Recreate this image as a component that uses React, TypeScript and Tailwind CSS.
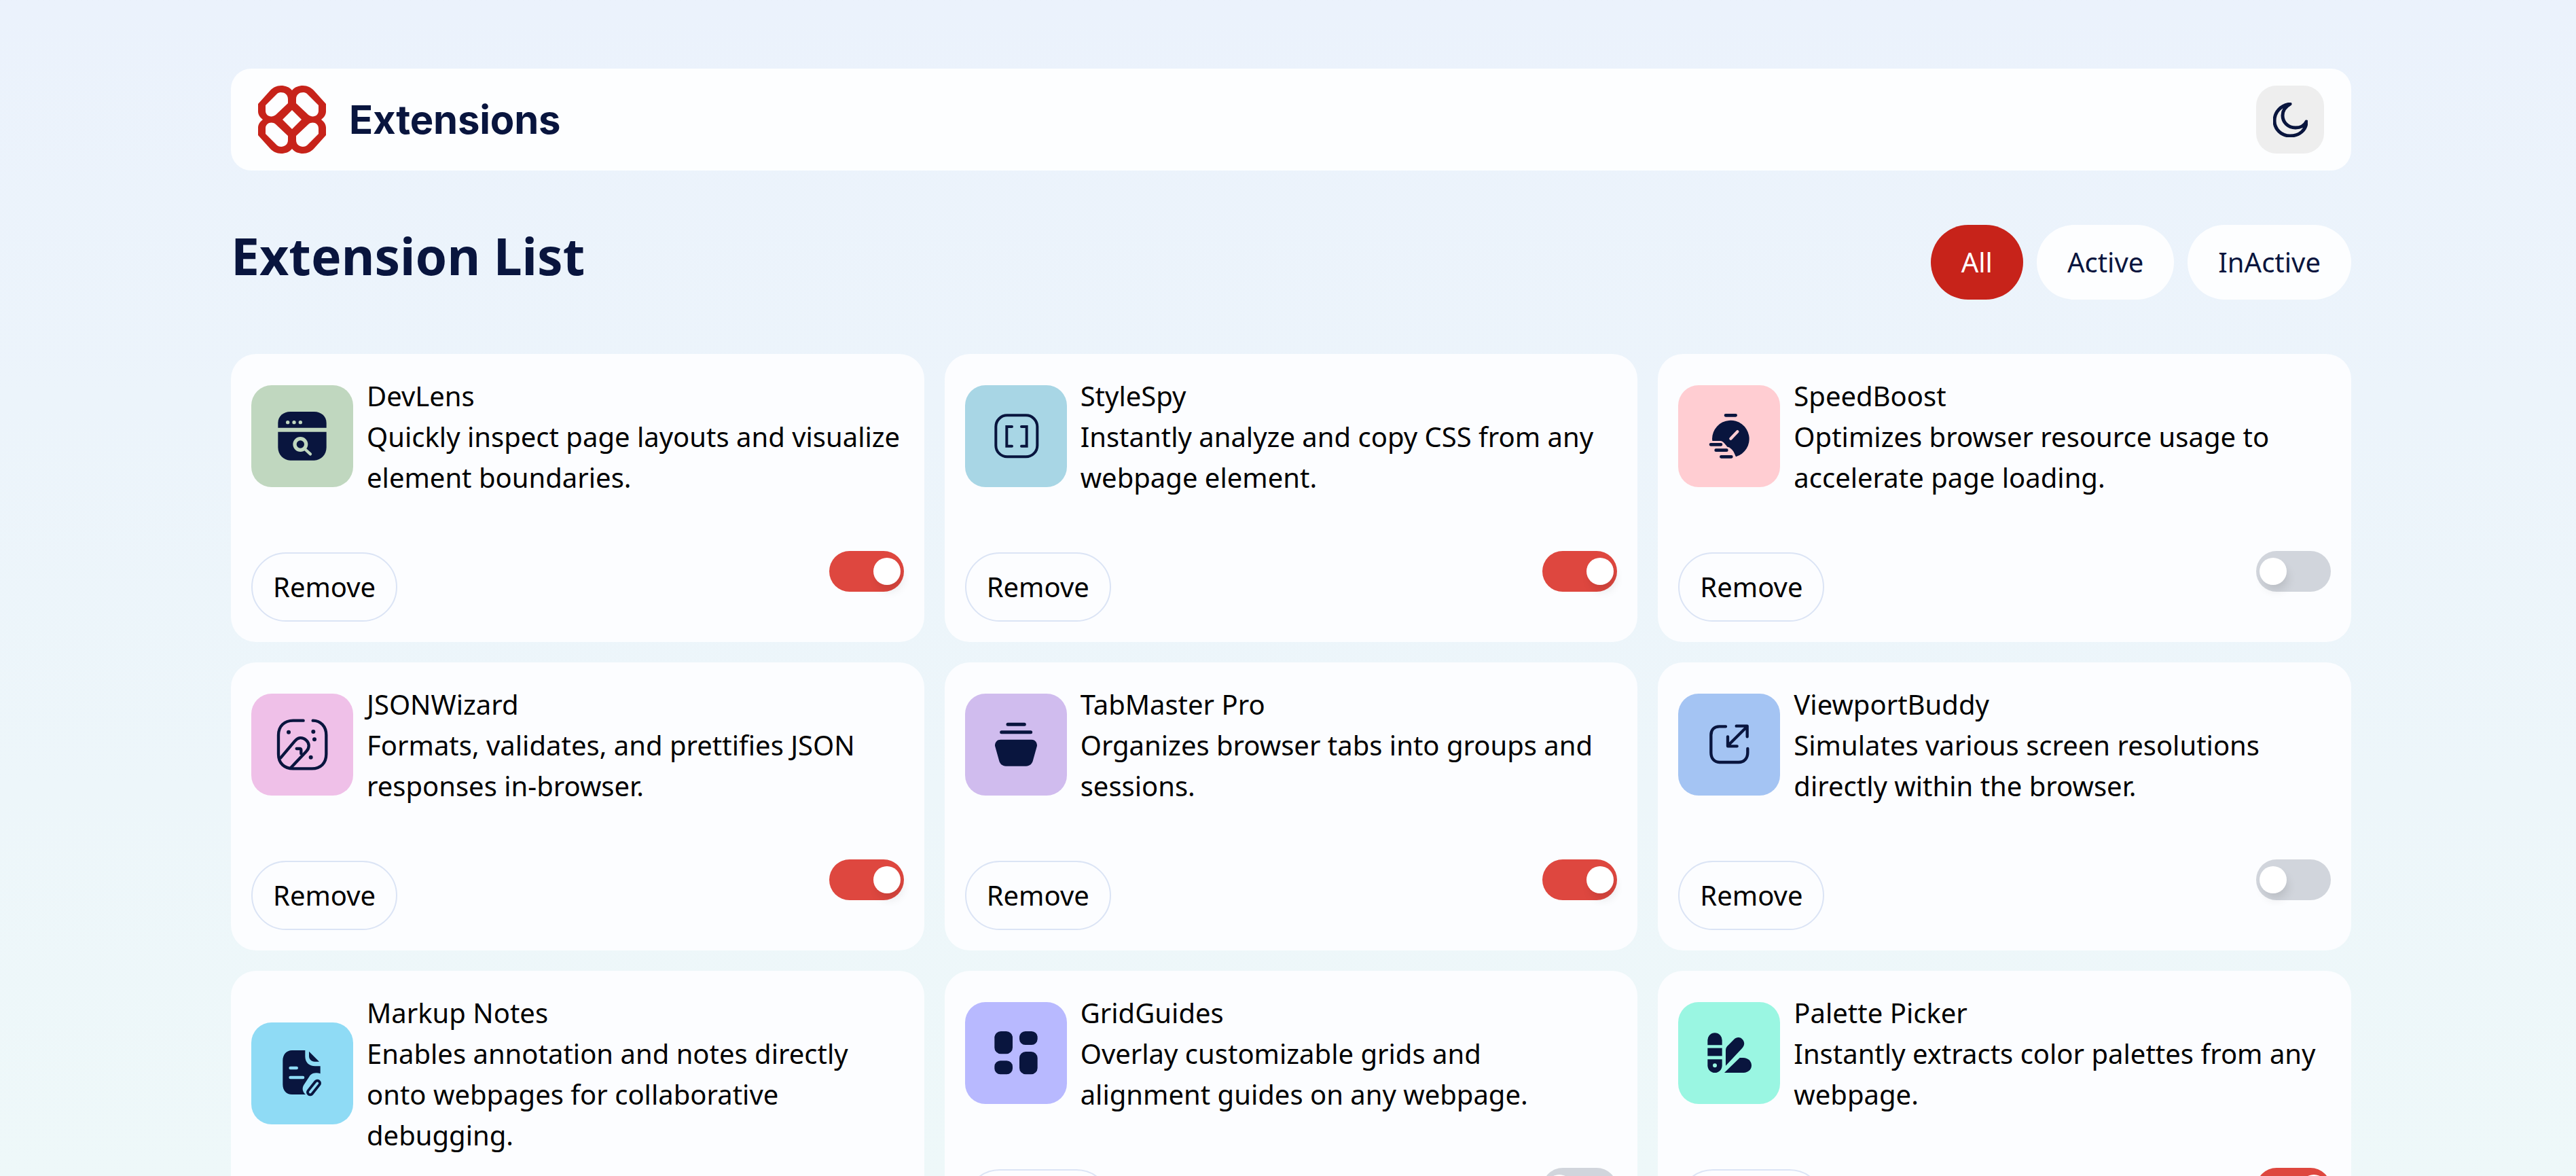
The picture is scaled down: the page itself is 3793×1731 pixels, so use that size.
const NAVY = "#09153e";

function Logo() {
  return (
    <svg width="100" height="100" viewBox="0 0 100 100" className="shrink-0" aria-hidden>
      <path
        fillRule="evenodd"
        fill="#c7231a"
        d="M50 7C46 2 40 0 34 0C27 0 22 3 18 7L0 27V38C0 43 3 47 7 50C3 53 0 57 0 62V73L18 93C22 97 27 100 34 100C40 100 46 98 50 93C54 98 60 100 66 100C73 100 78 97 82 93L100 73V62C100 57 97 53 93 50C97 47 100 43 100 38V27L82 7C78 3 73 0 66 0C60 0 54 2 50 7ZM11 29L28 12C33 8 44 10 44 20V26L26 43C20 48 11 45 11 37ZM89 29L72 12C67 8 56 10 56 20V26L74 43C80 48 89 45 89 37ZM11 71L28 88C33 92 44 90 44 80V74L26 57C20 52 11 55 11 63ZM89 71L72 88C67 92 56 90 56 80V74L74 57C80 52 89 55 89 63ZM50 36L36 50L50 64L64 50Z"
      />
    </svg>
  );
}

function Moon() {
  return (
    <svg width="51" height="51" viewBox="0 0 51 51" fill="none" stroke={NAVY} strokeWidth="5" strokeLinejoin="round" aria-hidden>
      <path d="M25 2C11 4 2 14 2 27C2 39 12 49 25 49C39 49 49 40 49 28C46 34 40 37 33 37C22 37 14 29 14 19C14 12 18 6 25 2Z" />
    </svg>
  );
}

// icons are traced 3x, so each viewBox is 240 wide for an 80px glyph
function DevLensIcon({ bg }: { bg: string }) {
  return (
    <svg width="80" height="80" viewBox="135 153 240 240" aria-hidden>
      <path fill={NAVY} d="M148 236V215C148 185 172 165 202 165H308C338 165 362 185 362 215V236Z" />
      <path fill={NAVY} d="M148 254H362V322C362 355 338 380 308 380H202C172 380 148 355 148 322Z" />
      <circle cx="191" cy="212" r="8" fill={bg} />
      <circle cx="219" cy="212" r="8" fill={bg} />
      <circle cx="247" cy="212" r="8" fill={bg} />
      <circle cx="247" cy="309" r="25" fill="none" stroke={bg} strokeWidth="16" />
      <path d="M270 333L291 352" stroke={bg} strokeWidth="13" strokeLinecap="round" />
    </svg>
  );
}

function StyleSpyIcon() {
  return (
    <svg width="80" height="80" viewBox="138 153 240 240" fill="none" stroke={NAVY} strokeWidth="12" strokeLinecap="round" aria-hidden>
      <rect x="169" y="181" width="183" height="183" rx="50" />
      <path d="M240 231H217V317H240M282 231H305V317H282" />
    </svg>
  );
}

function SpeedBoostIcon({ bg }: { bg: string }) {
  return (
    <svg width="80" height="80" viewBox="138 153 240 240" aria-hidden>
      <path fill={NAVY} d="M183 285A82 82 0 1 1 288 364L278 342C270 330 262 322 250 320C240 310 235 296 220 294H184Z" />
      <path
        fill="none"
        stroke={NAVY}
        strokeWidth="14"
        strokeLinecap="round"
        d="M243 181H287M177 310H222M200 335H247M223 364H268"
      />
      <path d="M265 284L295 253" stroke={bg} strokeWidth="13" strokeLinecap="round" />
    </svg>
  );
}

function JsonWizardIcon() {
  return (
    <svg width="80" height="80" viewBox="135 150 240 240" fill="none" stroke={NAVY} strokeWidth="13" strokeLinecap="round" aria-hidden>
      <path d="M260 164H215C175 164 150 190 150 228V312C150 352 175 376 215 376H298C336 376 361 352 361 312V228C361 190 336 164 302 164" />
      <path d="M160 328L222 255C235 238 255 235 272 250C288 264 288 285 273 300L205 372" />
      <path d="M230 288H244Q250 288 250 295V310" />
      <g fill={NAVY} stroke="none">
        <circle cx="195" cy="215" r="9" />
        <circle cx="304" cy="213" r="9" />
        <circle cx="309" cy="247" r="9" />
        <circle cx="293" cy="326" r="9" />
      </g>
    </svg>
  );
}

function TabMasterIcon() {
  return (
    <svg width="80" height="80" viewBox="138 150 240 240" aria-hidden>
      <path stroke={NAVY} strokeWidth="15" strokeLinecap="round" d="M222 181H295M194 215H323" />
      <path fill={NAVY} d="M165 275C165 258 175 248 190 248H326C341 248 351 258 351 275L333 340C329 356 318 365 303 365H213C198 365 187 356 183 340Z" />
    </svg>
  );
}

function ViewportIcon() {
  return (
    <svg width="80" height="80" viewBox="138 150 240 240" fill="none" stroke={NAVY} strokeWidth="13" strokeLinecap="round" strokeLinejoin="round" aria-hidden>
      <path d="M243 190H215C192 190 178 205 178 228V305C178 330 192 348 215 348H300C325 348 340 330 340 305V288" />
      <path d="M252 275L338 190M290 188H338V235M252 235V277H293" />
    </svg>
  );
}

function MarkupIcon({ bg }: { bg: string }) {
  return (
    <svg width="80" height="80" viewBox="135 147 240 240" aria-hidden>
      <path fill={NAVY} d="M268 165H210C185 165 169 185 169 210V315C169 342 185 360 210 360H270C258 350 252 335 262 318L290 275C300 265 318 262 335 268V235H312C285 235 268 218 268 192Z" />
      <path fill={NAVY} d="M285 170L330 215H310C295 215 285 205 285 190Z" />
      <path stroke={bg} strokeWidth="14" strokeLinecap="round" d="M203 243H230M203 285H258" />
      <path stroke={NAVY} strokeWidth="34" strokeLinecap="round" d="M290 350L322 310" />
      <path stroke={bg} strokeWidth="11" strokeLinecap="round" d="M290 350L322 310" />
    </svg>
  );
}

function GridIcon() {
  return (
    <svg width="80" height="80" viewBox="138 147 240 240" fill={NAVY} aria-hidden>
      <rect x="163" y="171" width="80" height="100" rx="28" />
      <rect x="273" y="171" width="80" height="60" rx="26" />
      <rect x="163" y="301" width="80" height="60" rx="26" />
      <rect x="273" y="261" width="80" height="100" rx="28" />
    </svg>
  );
}

function PaletteIcon({ bg }: { bg: string }) {
  return (
    <svg width="80" height="80" viewBox="138 147 240 240" fill={NAVY} aria-hidden>
      <path d="M163 232V210A32 32 0 0 1 227 210V232Z" />
      <rect x="163" y="245" width="64" height="35" />
      <path d="M163 295H227V322A32 32 0 0 1 163 322Z" />
      <circle cx="195" cy="322" r="9" fill={bg} />
      <path d="M243 323V255C243 245 248 238 255 232L280 206C292 194 310 196 318 208C328 220 326 235 316 245Z" />
      <path d="M237 354L305 288H320C342 288 357 303 357 322C357 340 342 354 322 354Z" />
    </svg>
  );
}

const extensions = [
  { name: "DevLens", description: "Quickly inspect page layouts and visualize element boundaries.", bg: "bg-[#c0d7bf]", active: true, icon: <DevLensIcon bg="#c0d7bf" /> },
  { name: "StyleSpy", description: "Instantly analyze and copy CSS from any webpage element.", bg: "bg-[#a8d6e5]", active: true, icon: <StyleSpyIcon /> },
  { name: "SpeedBoost", description: "Optimizes browser resource usage to accelerate page loading.", bg: "bg-[#ffcdd2]", active: false, icon: <SpeedBoostIcon bg="#ffcdd2" /> },
  { name: "JSONWizard", description: "Formats, validates, and prettifies JSON responses in-browser.", bg: "bg-[#efc0e8]", active: true, icon: <JsonWizardIcon /> },
  { name: "TabMaster Pro", description: "Organizes browser tabs into groups and sessions.", bg: "bg-[#d0bcee]", active: true, icon: <TabMasterIcon /> },
  { name: "ViewportBuddy", description: "Simulates various screen resolutions directly within the browser.", bg: "bg-[#a4c4f3]", active: false, icon: <ViewportIcon /> },
  { name: "Markup Notes", description: "Enables annotation and notes directly onto webpages for collaborative debugging.", bg: "bg-[#8fdbf5]", active: true, icon: <MarkupIcon bg="#8fdbf5" /> },
  { name: "GridGuides", description: "Overlay customizable grids and alignment guides on any webpage.", bg: "bg-[#b8b9ff]", active: false, icon: <GridIcon /> },
  { name: "Palette Picker", description: "Instantly extracts color palettes from any webpage.", bg: "bg-[#9af6e2]", active: true, icon: <PaletteIcon bg="#9af6e2" /> },
];

function Toggle({ on }: { on: boolean }) {
  return (
    <div className={`flex h-[60px] w-[110px] items-center rounded-full px-[5px] ${on ? "justify-end bg-[#de473f]" : "justify-start bg-[#d1d5dc]"}`}>
      <div className="size-[40px] rounded-full bg-white shadow-[4px_10px_15px_-3px_rgba(0,0,0,0.12)]" />
    </div>
  );
}

function ExtensionCard({ ext }: { ext: (typeof extensions)[number] }) {
  return (
    <div className="rounded-[37px] bg-[#fcfdff] p-[30px]">
      <div className="flex items-center gap-[20px]">
        <div className={`flex size-[150px] shrink-0 items-center justify-center rounded-[30px] ${ext.bg}`}>
          {ext.icon}
        </div>
        <div className="pt-[2px] text-black">
          <h2>{ext.name}</h2>
          <p>{ext.description}</p>
        </div>
      </div>
      <div className="mt-[78px] flex items-start justify-between">
        <button className="mt-[2px] rounded-full border-[2.5px] border-[#dbe4f5] px-[30px] py-[19px] text-black">Remove</button>
        <Toggle on={ext.active} />
      </div>
    </div>
  );
}

export default function App() {
  return (
    <div className="h-screen overflow-hidden bg-linear-to-b from-[#ebf2fc] to-[#eef8f9] pt-[101px] pr-[331px] pl-[340px] font-['Noto_Sans',sans-serif] text-[40px] leading-[60px]">
      <header className="flex h-[150px] items-center justify-between rounded-[30px] bg-[#fdfeff] pr-[40px] pl-[40px]">
        <div className="flex items-center gap-[34px]">
          <Logo />
          <span className="font-['Inter',sans-serif] text-[58px] leading-none font-bold tracking-[-0.2px] text-[#09153e]">Extensions</span>
        </div>
        <button className="flex size-[100px] items-center justify-center rounded-[30px] bg-[#eeeeee]">
          <Moon />
        </button>
      </header>

      <div className="mt-[80px] flex items-start justify-between">
        <h1 className="text-[75px] leading-[90px] font-bold text-[#09153e]">Extension List</h1>
        <div className="flex gap-[20px]">
          <button className="rounded-full bg-[#c7231a] px-[45px] py-[25px] text-white">All</button>
          <button className="rounded-full bg-[#fdfeff] px-[45px] py-[25px] text-[#09153e]">Active</button>
          <button className="rounded-full bg-[#fdfeff] px-[45px] py-[25px] text-[#09153e]">InActive</button>
        </div>
      </div>

      <div className="mt-[80px] grid grid-cols-3 items-start gap-[30px]">
        {extensions.map((ext) => (
          <ExtensionCard key={ext.name} ext={ext} />
        ))}
      </div>
    </div>
  );
}
